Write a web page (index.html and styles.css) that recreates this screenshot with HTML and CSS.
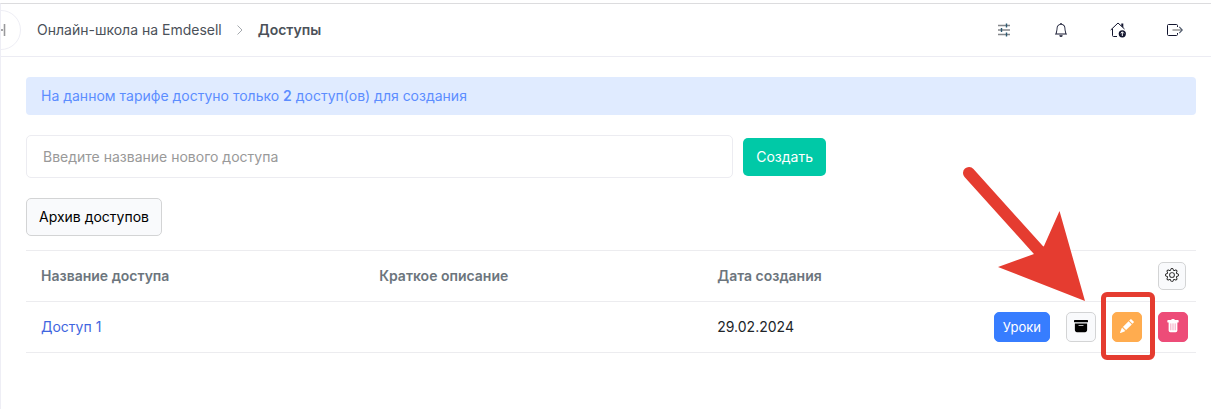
FILE: index.html
```html
<!DOCTYPE html>
<html lang="ru">
<head>
    <meta charset="UTF-8">
    <meta name="viewport" content="width=device-width, initial-scale=1.0">
    <title>Доступы</title>
    <link rel="stylesheet" href="styles.css">
</head>
<body>
<div class="page">
    <header class="topbar">
        <button class="sidebar-toggle" type="button" aria-label="Показать меню">
            <svg width="12" height="16" viewBox="0 0 12 16"><path d="M0 8h8" stroke="#a5a5a8" stroke-width="2"/><path d="M9.500 2v12" stroke="#99999c" stroke-width="1.600"/></svg>
        </button>
        <nav class="breadcrumbs">
            <a href="#">Онлайн-школа на Emdesell</a>
            <svg class="chevron" width="8" height="12" viewBox="0 0 8 12"><path d="M1.500 1.500 6 6l-4.500 4.500" fill="none" stroke="#a5a9ae" stroke-width="1"/></svg>
            <span class="current">Доступы</span>
        </nav>
        <div class="top-icons">
            <button type="button" aria-label="Настройки">
                <svg width="14" height="14" viewBox="0 0 14 14">
                    <path d="M1 2.500h12M1 7h12M1 11.500h12" fill="none" stroke="#85878b" stroke-width="1.400"/>
                    <path d="M9.500 .500v4M4.500 5v4M9.500 9.500v4" fill="none" stroke="#2c5870" stroke-width="1.400"/>
                </svg>
            </button>
            <button type="button" aria-label="Уведомления">
                <svg width="14" height="14" viewBox="0 0 16 16" fill="#12152e"><path d="M8 16a2 2 0 0 0 2-2H6a2 2 0 0 0 2 2M8 1.918l-.797.161A4 4 0 0 0 4 6c0 .628-.134 2.197-.459 3.742-.16.767-.376 1.566-.663 2.258h10.244c-.287-.692-.502-1.490-.663-2.258C12.134 8.197 12 6.628 12 6a4 4 0 0 0-3.203-3.920zM14.220 12c.223.447.481.801.780 1H1c.299-.199.557-.553.780-1C2.680 10.200 3 6.880 3 6c0-2.420 1.720-4.440 4.005-4.901a1 1 0 1 1 1.990 0A5 5 0 0 1 13 6c0 .880.320 4.200 1.220 6"/></svg>
            </button>
            <button type="button" aria-label="На сайт">
                <svg width="16" height="16" viewBox="0 0 16 16">
                    <path d="M.700 8 8 1l6.500 6M2.500 6.800v6.700c0 .600.400 1 1 1h3.500" fill="none" stroke="#12152e" stroke-width="1"/>
                    <path d="M11.300 1.500h2v4.300l-2-2z" fill="#12152e"/>
                    <circle cx="12.300" cy="11.800" r="3.600" fill="#12152e"/>
                    <path d="M12.300 14V10M10.700 11.400l1.600-1.600 1.600 1.600" fill="none" stroke="#fff" stroke-width="1"/>
                </svg>
            </button>
            <button type="button" aria-label="Выйти">
                <svg width="16" height="14" viewBox="0 0 16 14">
                    <path d="M10.500 4V2.500c0-.600-.400-1-1-1h-8c-.600 0-1 .400-1 1v9c0 .600.400 1 1 1h8c.600 0 1-.400 1-1V10" fill="none" stroke="#12152e" stroke-width="1"/>
                    <path d="M5.500 7H15" stroke="#9b9b9b" stroke-width="1.600"/>
                    <path d="m12.300 3.800 3 3.200-3 3.200" fill="none" stroke="#4a5568" stroke-width="1.100"/>
                </svg>
            </button>
        </div>
    </header>

    <main class="content">
        <div class="alert">На данном тарифе достуно только <b>2</b> доступ(ов) для создания</div>

        <form class="create-form">
            <input type="text" placeholder="Введите название нового доступа" aria-label="Название нового доступа">
            <button class="btn btn-success" type="button">Создать</button>
        </form>

        <button class="btn btn-light" type="button">Архив доступов</button>

        <table class="access-table">
            <thead>
                <tr>
                    <th class="col-data">Название доступа</th>
                    <th class="col-data">Краткое описание</th>
                    <th>Дата создания</th>
                    <th class="col-actions">
                        <div class="actions">
                            <button class="btn-icon btn-gear" type="button" aria-label="Настроить таблицу">
                                <svg width="14" height="14" viewBox="0 0 16 16" fill="#222"><path d="M8 4.754a3.246 3.246 0 1 0 0 6.492 3.246 3.246 0 0 0 0-6.492M5.754 8a2.246 2.246 0 1 1 4.492 0 2.246 2.246 0 0 1-4.492 0"/><path d="M9.796 1.343c-.527-1.790-3.065-1.790-3.592 0l-.094.319a.873.873 0 0 1-1.255.520l-.292-.160c-1.640-.892-3.433.902-2.540 2.541l.159.292a.873.873 0 0 1-.520 1.255l-.319.094c-1.790.527-1.790 3.065 0 3.592l.319.094a.873.873 0 0 1 .520 1.255l-.160.292c-.892 1.640.901 3.434 2.541 2.540l.292-.159a.873.873 0 0 1 1.255.520l.094.319c.527 1.790 3.065 1.790 3.592 0l.094-.319a.873.873 0 0 1 1.255-.520l.292.160c1.640.893 3.434-.902 2.540-2.541l-.159-.292a.873.873 0 0 1 .520-1.255l.319-.094c1.790-.527 1.790-3.065 0-3.592l-.319-.094a.873.873 0 0 1-.520-1.255l.160-.292c.893-1.640-.902-3.433-2.541-2.540l-.292.159a.873.873 0 0 1-1.255-.520zm-2.633.283c.246-.835 1.428-.835 1.674 0l.094.319a1.873 1.873 0 0 0 2.693 1.115l.291-.160c.764-.415 1.600.420 1.184 1.185l-.159.292a1.873 1.873 0 0 0 1.116 2.692l.318.094c.835.246.835 1.428 0 1.674l-.319.094a1.873 1.873 0 0 0-1.115 2.693l.160.291c.415.764-.420 1.600-1.185 1.184l-.291-.159a1.873 1.873 0 0 0-2.693 1.116l-.094.318c-.246.835-1.428.835-1.674 0l-.094-.319a1.873 1.873 0 0 0-2.692-1.115l-.292.160c-.764.415-1.600-.420-1.184-1.185l.159-.291A1.873 1.873 0 0 0 1.945 8.930l-.319-.094c-.835-.246-.835-1.428 0-1.674l.319-.094A1.873 1.873 0 0 0 3.060 4.377l-.160-.292c-.415-.764.420-1.600 1.185-1.184l.292.159a1.873 1.873 0 0 0 2.692-1.115z"/></svg>
                            </button>
                        </div>
                    </th>
                </tr>
            </thead>
            <tbody>
                <tr>
                    <td><a href="#">Доступ 1</a></td>
                    <td></td>
                    <td>29.02.2024</td>
                    <td class="col-actions">
                        <div class="actions">
                            <button class="btn-icon btn-lessons" type="button">Уроки</button>
                            <button class="btn-icon" type="button" aria-label="В архив">
                                <svg width="14" height="14" viewBox="0 0 16 16" fill="#000"><path d="M12.643 15C13.979 15 15 13.845 15 12.500V5H1v7.500C1 13.845 2.021 15 3.357 15zM5.500 7h5a.500.500 0 0 1 0 1h-5a.500.500 0 0 1 0-1M.800 1a.800.800 0 0 0-.800.800V3a.800.800 0 0 0 .800.800h14.400A.800.800 0 0 0 16 3V1.800a.800.800 0 0 0-.800-.800z"/></svg>
                            </button>
                            <div class="marked">
                                <button class="btn-icon btn-edit" type="button" aria-label="Редактировать">
                                    <svg width="14" height="14" viewBox="0 0 16 16" fill="#fff"><path d="M12.854.146a.500.500 0 0 0-.707 0L10.500 1.793 14.207 5.500l1.647-1.646a.500.500 0 0 0 0-.708zm.646 6.061L9.793 2.500 3.293 9H3.500a.500.500 0 0 1 .500.500v.500h.500a.500.500 0 0 1 .500.500v.500h.500a.500.500 0 0 1 .500.500v.500h.500a.500.500 0 0 1 .500.500v.207zm-7.468 7.468A.500.500 0 0 1 6 13.500V13h-.500a.500.500 0 0 1-.500-.500V12h-.500a.500.500 0 0 1-.500-.500V11h-.500a.500.500 0 0 1-.500-.500V10h-.500a.500.500 0 0 1-.175-.032l-.179.178a.500.500 0 0 0-.110.168l-2 5a.500.500 0 0 0 .650.650l5-2a.500.500 0 0 0 .168-.110z"/></svg>
                                </button>
                                <span class="mark-frame"></span>
                                <svg class="mark-arrow" width="130" height="145" viewBox="0 0 130 145">
                                    <path d="M9 13 82 94" stroke="#e53c30" stroke-width="12" stroke-linecap="round"/>
                                    <path d="M125 141 99.500 51 84 86 74 94 38 107z" fill="#e53c30"/>
                                </svg>
                            </div>
                            <button class="btn-icon btn-delete" type="button" aria-label="Удалить">
                                <svg width="14" height="14" viewBox="0 0 16 16" fill="#fff"><path d="M2.500 1a1 1 0 0 0-1 1v1a1 1 0 0 0 1 1H3v9a2 2 0 0 0 2 2h6a2 2 0 0 0 2-2V4h.500a1 1 0 0 0 1-1V2a1 1 0 0 0-1-1H10a1 1 0 0 0-1-1H7a1 1 0 0 0-1 1z"/><path d="M5.500 5.500v7M8 5.500v7M10.500 5.500v7" stroke="#f29ab5" stroke-width="1" stroke-linecap="round"/></svg>
                            </button>
                        </div>
                    </td>
                </tr>
            </tbody>
        </table>
    </main>
</div>
</body>
</html>
```
FILE: styles.css
```css
* {
    box-sizing: border-box;
}
body {
    margin: 0;
    padding-top: 3px;
    background: #fff;
    color: #212529;
    font-family: Inter, "Liberation Sans", sans-serif;
    font-size: 14px;
    line-height: 20px;
}
button, input {
    font: inherit;
}
button {
    cursor: pointer;
}
.page {
    min-height: calc(100vh - 3px);
    border-top: 1px solid #dcdcde;
    border-left: 1px solid #eeeef5;
    overflow: hidden;
}
.topbar {
    position: relative;
    display: flex;
    align-items: center;
    justify-content: space-between;
    height: 53px;
    padding: 0 8px 0 36px;
    border-bottom: 1px solid #ececf3;
}
/* half hidden behind the left edge */
.sidebar-toggle {
    position: absolute;
    left: -20px;
    top: 6px;
    display: flex;
    align-items: center;
    justify-content: center;
    width: 40px;
    height: 40px;
    padding: 0;
    background: #fff;
    border: 1px solid #eeeef5;
    border-radius: 50%;
}
.breadcrumbs {
    display: flex;
    align-items: center;
    color: #4b5159;
}
.breadcrumbs a {
    color: inherit;
    text-decoration: none;
}
.chevron {
    margin: 0 14px;
}
.current {
    font-weight: 600;
}
.top-icons {
    display: flex;
}
.top-icons button {
    display: flex;
    align-items: center;
    justify-content: center;
    width: 57px;
    height: 40px;
    padding: 0;
    background: none;
    border: 0;
}
.content {
    padding: 20px 15px 20px 25px;
}
.alert {
    padding: 9px 15px;
    background: #e0ebff;
    border-radius: 4px;
    color: #5c8dff;
}
.alert b {
    font-weight: 600;
}
.create-form {
    display: flex;
    align-items: center;
    gap: 10px;
    max-width: 800px;
    margin: 20px 0;
}
.create-form input {
    flex: 1;
    min-width: 0;
    height: 43px;
    padding: 0 16px;
    background: #fff;
    border: 1px solid #ececf1;
    border-radius: 5px;
}
.create-form input::placeholder {
    color: #999;
    opacity: 1;
}
.btn {
    display: block;
    height: 38px;
    padding: 0 12px;
    border: 1px solid transparent;
    border-radius: 5px;
}
.btn-success {
    background: #00c9a7;
    color: #fff;
}
.btn-light {
    background: #f9fafc;
    border-color: #d3d4d5;
    color: #000;
}
.access-table {
    width: 100%;
    margin-top: 14px;
    table-layout: fixed;
    border-collapse: collapse;
}
.access-table th,
.access-table td {
    height: 51px;
    padding: 0 15px;
    border-top: 1px solid #ececef;
    border-bottom: 1px solid #ececef;
    text-align: left;
}
.access-table th {
    color: #6c757d;
    font-weight: 600;
}
.access-table .col-data {
    width: 28.9%;
}
.access-table a {
    color: #3f66e0;
    text-decoration: none;
}
.access-table .col-actions {
    padding: 0 8px;
}
.actions {
    display: flex;
    align-items: center;
    justify-content: flex-end;
    gap: 16px;
}
.btn-icon {
    display: flex;
    align-items: center;
    justify-content: center;
    width: 30px;
    height: 30px;
    padding: 0 0 2px;
    background: #f9fafc;
    border: 1px solid #d3d4d5;
    border-radius: 5px;
}
.btn-gear {
    width: 28px;
    height: 28px;
    margin-right: 2px;
}
.btn-lessons {
    width: auto;
    padding: 0 8px;
    background: #377dff;
    border-color: #377dff;
    color: #fff;
    font-size: 13px;
}
.btn-edit {
    background: #ffac4f;
    border-color: #ffac4f;
}
.btn-delete {
    background: #ed4c78;
    border-color: #ed4c78;
}
/* red highlight drawn over the edit button */
.marked {
    position: relative;
}
.mark-frame {
    position: absolute;
    left: -11px;
    top: -20px;
    width: 54px;
    height: 68px;
    border: 5px solid #e53c30;
    border-radius: 6px;
    pointer-events: none;
}
.mark-arrow {
    position: absolute;
    left: -152px;
    top: -152px;
    pointer-events: none;
}
```
